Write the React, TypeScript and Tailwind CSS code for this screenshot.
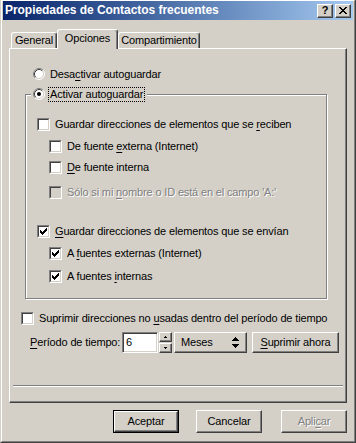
import type { ReactNode } from 'react';

const CHECK = ['......X', '.....XX', 'X...XXX', 'XX.XXX.', 'XXXXX..', '.XXX...', '..X....'];
const CLOSE = ['XX....XX', '.XX..XX.', '..XXXX..', '...XX...', '..XXXX..', '.XX..XX.', 'XX....XX'];
const UP = ['.X.', 'XXX'];
const DOWN = ['XXX', '.X.'];
const UPDOWN = [
  '...X...',
  '..XXX..',
  '.XXXXX.',
  'XXXXXXX',
  '.......',
  '.......',
  '.......',
  'XXXXXXX',
  '.XXXXX.',
  '..XXX..',
  '...X...',
];

function Pixels({ rows, color = '#000' }: { rows: string[]; color?: string }) {
  return (
    <svg width={rows[0].length} height={rows.length} shapeRendering="crispEdges" className="block">
      {rows.flatMap((r, y) =>
        [...r].map((c, x) =>
          c === 'X' ? <rect key={`${x}-${y}`} x={x} y={y} width={1} height={1} fill={color} /> : null
        )
      )}
    </svg>
  );
}

function Key({ children }: { children: ReactNode }) {
  return <span className="underline underline-offset-2">{children}</span>;
}

function CheckBox({ checked, disabled }: { checked?: boolean; disabled?: boolean }) {
  return (
    <span className="block w-[13px] h-[13px] shrink-0 border border-t-[#808080] border-l-[#808080] border-r-white border-b-white">
      <span
        className={`flex items-center justify-center w-full h-full border border-t-[#404040] border-l-[#404040] border-r-[#d4d0c8] border-b-[#d4d0c8] ${
          disabled ? 'bg-[#d4d0c8]' : 'bg-white'
        }`}
      >
        {checked && <Pixels rows={CHECK} />}
      </span>
    </span>
  );
}

function Radio({ checked }: { checked?: boolean }) {
  return (
    <svg width="12" height="12" className="block shrink-0">
      <circle cx="6" cy="6" r="5" fill="#fff" />
      <path d="M2.11 9.89 A5.5 5.5 0 0 1 9.89 2.11" stroke="#808080" fill="none" />
      <path d="M9.89 2.11 A5.5 5.5 0 0 1 2.11 9.89" stroke="#fff" fill="none" />
      <path d="M2.82 9.18 A4.5 4.5 0 0 1 9.18 2.82" stroke="#404040" fill="none" />
      <path d="M9.18 2.82 A4.5 4.5 0 0 1 2.82 9.18" stroke="#d4d0c8" fill="none" />
      {checked && <circle cx="6" cy="6" r="2" fill="#000" />}
    </svg>
  );
}

function CheckRow({
  checked,
  disabled,
  className,
  children,
}: {
  checked?: boolean;
  disabled?: boolean;
  className: string;
  children: ReactNode;
}) {
  return (
    <div className={`flex items-center h-[16px] ${className}`}>
      <CheckBox checked={checked} disabled={disabled} />
      <span className={`ml-[5px] whitespace-nowrap ${disabled ? 'text-[#808080] [text-shadow:1px_1px_0_#fff]' : ''}`}>
        {children}
      </span>
    </div>
  );
}

const RAISED =
  'border border-t-white border-l-white border-r-[#404040] border-b-[#404040] shadow-[inset_-1px_-1px_0_#808080] bg-[#d4d0c8]';

function Tab({ label, active, className }: { label: string; active?: boolean; className: string }) {
  return (
    <div
      className={`flex items-center justify-center bg-[#d4d0c8] border-l border-t border-r border-l-white border-t-white border-r-[#404040] shadow-[inset_-1px_0_0_#808080] rounded-t-[3px] ${
        active ? 'relative z-10 h-[20px] -mb-[1px] pb-[3px]' : 'h-[16px]'
      } ${className}`}
    >
      {label}
    </div>
  );
}

export default function App() {
  return (
    <div className="w-[356px] h-[443px] bg-[#d4d0c8] border-l border-r border-b border-l-[#d4d0c8] border-r-[#404040] border-b-[#404040] font-['Liberation_Sans',Arial,sans-serif] text-[11px] leading-[13px] text-black tracking-[-0.15px]">
      <div className="h-full flex flex-col px-[1px] border-l border-t border-r border-b border-l-white border-t-white border-r-[#808080] border-b-[#808080]">
        {/* title bar */}
        <div className="h-[19px] flex items-center bg-linear-to-r from-[#0a246a] to-[#a6caf0] pl-[2px]">
          <span className="text-white font-bold text-[12px] tracking-[-0.05px]">Propiedades de Contactos frecuentes</span>
          <div className={`ml-auto w-[16px] h-[14px] flex items-center justify-center font-bold text-[11px] ${RAISED}`}>?</div>
          <div className={`ml-[2px] mr-[2px] w-[16px] h-[14px] flex items-center justify-center ${RAISED}`}>
            <Pixels rows={CLOSE} />
          </div>
        </div>

        {/* tabs */}
        <div className="mt-[9px] h-[19px] flex items-end pl-[6px]">
          <Tab label="General" className="ml-[2px] w-[46px]" />
          <Tab label="Opciones" active className="w-[61px]" />
          <Tab label="Compartimiento" className="w-[82px]" />
        </div>

        {/* panel */}
        <div className="ml-[6px] w-[338px] h-[355px] flex flex-col border border-t-white border-l-white border-r-[#404040] border-b-[#404040] shadow-[inset_-1px_-1px_0_#808080]">
          <div className="mt-[17px] ml-[23px] h-[16px] flex items-center">
            <Radio />
            <span className="ml-[5px]">
              Desa<Key>c</Key>tivar autoguardar
            </span>
          </div>

          <div className="mt-[12px] ml-[15px] w-[302px] h-[205px] flex flex-col border border-[#808080] shadow-[1px_1px_0_#fff,inset_1px_1px_0_#fff]">
            <div className="-mt-[9px] ml-[5px] w-fit h-[16px] flex items-center bg-[#d4d0c8] px-[2px]">
              <Radio checked />
              <span className="ml-[3px] border border-dotted border-black px-[1px]">Activar autoguardar</span>
            </div>
            <CheckRow className="mt-[14px] ml-[11px]">
              Guardar direcciones de elementos que se <Key>r</Key>eciben
            </CheckRow>
            <CheckRow className="mt-[6px] ml-[23px]">
              De fuente <Key>e</Key>xterna (Internet)
            </CheckRow>
            <CheckRow className="mt-[5px] ml-[23px]">
              <Key>D</Key>e fuente interna
            </CheckRow>
            <CheckRow disabled className="mt-[9px] ml-[23px]">
              Sólo si mi <Key>n</Key>ombre o ID está en el campo 'A:'
            </CheckRow>
            <CheckRow checked className="mt-[23px] ml-[11px]">
              <Key>G</Key>uardar direcciones de elementos que se envían
            </CheckRow>
            <CheckRow checked className="mt-[6px] ml-[23px]">
              A <Key>f</Key>uentes externas (Internet)
            </CheckRow>
            <CheckRow checked className="mt-[7px] ml-[23px]">
              A fuentes <Key>i</Key>nternas
            </CheckRow>
          </div>

          <CheckRow className="mt-[11px] ml-[11px]">
            Suprimir direcciones no <Key>u</Key>sadas dentro del período de tiempo
          </CheckRow>

          <div className="mt-[6px] h-[21px] flex items-stretch">
            <span className="ml-[20px] w-[92px] self-center whitespace-nowrap">
              <Key>P</Key>eríodo de tiempo:
            </span>
            <div className="w-[36px] flex items-center pl-[3px] bg-white border border-t-[#808080] border-l-[#808080] border-r-white border-b-white shadow-[inset_1px_1px_0_#404040,inset_-1px_-1px_0_#d4d0c8]">
              6
            </div>
            <div className="ml-[1px] w-[13px] flex flex-col">
              <div className={`h-[10px] flex items-center justify-center ${RAISED}`}>
                <Pixels rows={UP} />
              </div>
              <div className={`h-[10px] mt-[1px] flex items-center justify-center ${RAISED}`}>
                <Pixels rows={DOWN} />
              </div>
            </div>
            <div className={`ml-[2px] w-[73px] flex items-center justify-between pl-[6px] pr-[7px] ${RAISED}`}>
              <span>Meses</span>
              <Pixels rows={UPDOWN} />
            </div>
            <div className={`ml-[5px] w-[87px] flex items-center justify-center ${RAISED}`}>
              <span>
                <Key>S</Key>uprimir ahora
              </span>
            </div>
          </div>

          <div className="mt-[32px] ml-[3px] w-[330px] h-[2px] border-t border-b border-t-[#808080] border-b-white" />
        </div>

        {/* buttons */}
        <div className="mt-[7px] h-[23px] flex">
          <div className="ml-[110px] w-[66px] border border-black">
            <div className={`h-full flex items-center justify-center ${RAISED}`}>Aceptar</div>
          </div>
          <div className={`ml-[17px] w-[66px] flex items-center justify-center ${RAISED}`}>Cancelar</div>
          <div className={`ml-[19px] w-[66px] flex items-center justify-center text-[#808080] [text-shadow:1px_1px_0_#fff] ${RAISED}`}>
            <span>
              Apli<Key>c</Key>ar
            </span>
          </div>
        </div>
      </div>
    </div>
  );
}
